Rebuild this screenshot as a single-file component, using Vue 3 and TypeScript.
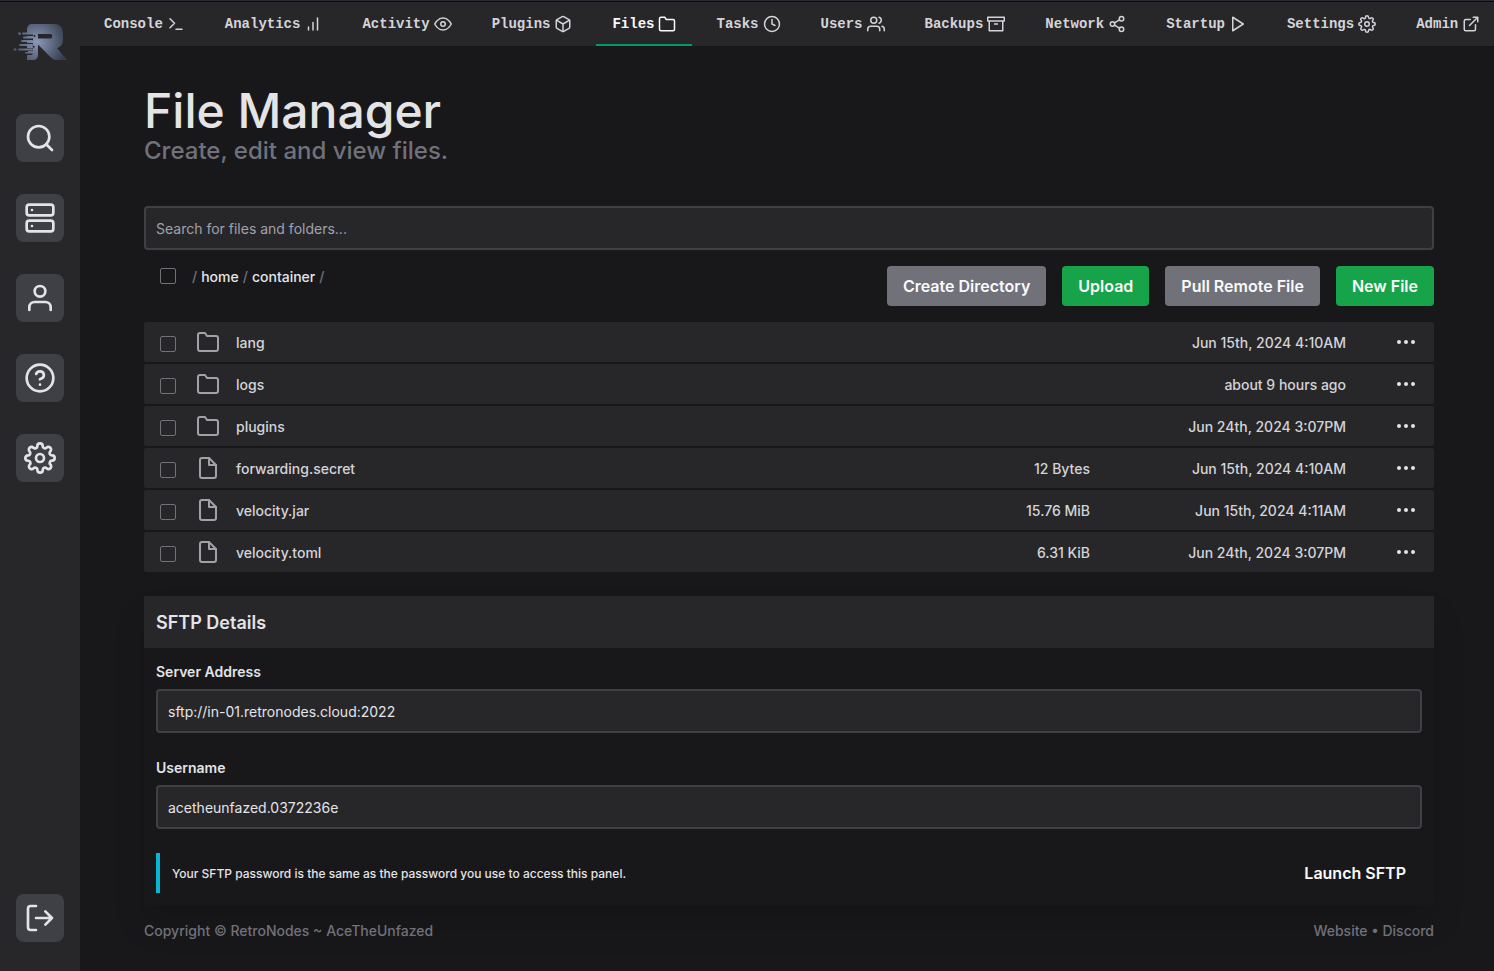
<script setup lang="ts">
import { ref } from 'vue'

interface NavItem {
  label: string
  icon: string
}

interface FileEntry {
  name: string
  kind: 'folder' | 'file'
  size: string
  modified: string
}

const icons: Record<string, string> = {
  terminal: '<path d="M4 17l6-6-6-6M12 19h8"/>',
  chart: '<path d="M18 20V4M12 20V10M6 20v-4"/>',
  eye: '<path d="M1 12s4-8 11-8 11 8 11 8-4 8-11 8-11-8-11-8z"/><circle cx="12" cy="12" r="3"/>',
  box: '<path d="M21 16V8a2 2 0 0 0-1-1.73l-7-4a2 2 0 0 0-2 0l-7 4A2 2 0 0 0 3 8v8a2 2 0 0 0 1 1.73l7 4a2 2 0 0 0 2 0l7-4A2 2 0 0 0 21 16z"/><path d="M3.27 6.96L12 12.01l8.73-5.05M12 22.08V12"/>',
  folder: '<path d="M22 19a2 2 0 0 1-2 2H4a2 2 0 0 1-2-2V5a2 2 0 0 1 2-2h5l2 3h9a2 2 0 0 1 2 2z"/>',
  clock: '<circle cx="12" cy="12" r="10"/><path d="M12 6v6l4 2"/>',
  users: '<path d="M17 21v-2a4 4 0 0 0-4-4H5a4 4 0 0 0-4 4v2"/><circle cx="9" cy="7" r="4"/><path d="M23 21v-2a4 4 0 0 0-3-3.87M16 3.13a4 4 0 0 1 0 7.75"/>',
  archive: '<path d="M21 8v13H3V8M1 3h22v5H1zM10 12h4"/>',
  share: '<circle cx="18" cy="5" r="3"/><circle cx="6" cy="12" r="3"/><circle cx="18" cy="19" r="3"/><path d="M8.59 13.51l6.83 3.98M15.41 6.51l-6.82 3.98"/>',
  play: '<path d="M5 3l14 9-14 9z"/>',
  settings: '<circle cx="12" cy="12" r="3"/><path d="M19.4 15a1.65 1.65 0 0 0 .33 1.82l.06.06a2 2 0 0 1 0 2.83 2 2 0 0 1-2.83 0l-.06-.06a1.65 1.65 0 0 0-1.82-.33 1.65 1.65 0 0 0-1 1.51V21a2 2 0 0 1-2 2 2 2 0 0 1-2-2v-.09A1.65 1.65 0 0 0 9 19.4a1.65 1.65 0 0 0-1.82.33l-.06.06a2 2 0 0 1-2.83 0 2 2 0 0 1 0-2.83l.06-.06a1.65 1.65 0 0 0 .33-1.82 1.65 1.65 0 0 0-1.51-1H3a2 2 0 0 1-2-2 2 2 0 0 1 2-2h.09A1.65 1.65 0 0 0 4.6 9a1.65 1.65 0 0 0-.33-1.82l-.06-.06a2 2 0 0 1 0-2.83 2 2 0 0 1 2.83 0l.06.06a1.65 1.65 0 0 0 1.82.33H9a1.65 1.65 0 0 0 1-1.51V3a2 2 0 0 1 2-2 2 2 0 0 1 2 2v.09a1.65 1.65 0 0 0 1 1.51 1.65 1.65 0 0 0 1.82-.33l.06-.06a2 2 0 0 1 2.83 0 2 2 0 0 1 0 2.83l-.06.06a1.65 1.65 0 0 0-.33 1.82V9a1.65 1.65 0 0 0 1.51 1H21a2 2 0 0 1 2 2 2 2 0 0 1-2 2h-.09a1.65 1.65 0 0 0-1.51 1z"/>',
  external: '<path d="M18 13v6a2 2 0 0 1-2 2H5a2 2 0 0 1-2-2V8a2 2 0 0 1 2-2h6M15 3h6v6M10 14L21 3"/>',
  search: '<circle cx="11" cy="11" r="8"/><path d="M21 21l-4.35-4.35"/>',
  server: '<rect x="2" y="2" width="20" height="8" rx="2"/><rect x="2" y="14" width="20" height="8" rx="2"/><path d="M6 6h.01M6 18h.01"/>',
  user: '<path d="M20 21v-2a4 4 0 0 0-4-4H8a4 4 0 0 0-4 4v2"/><circle cx="12" cy="7" r="4"/>',
  help: '<circle cx="12" cy="12" r="10"/><path d="M9.09 9a3 3 0 0 1 5.83 1c0 2-3 3-3 3M12 17h.01"/>',
  logout: '<path d="M9 21H5a2 2 0 0 1-2-2V5a2 2 0 0 1 2-2h4M16 17l5-5-5-5M21 12H9"/>',
  file: '<path d="M13 2H6a2 2 0 0 0-2 2v16a2 2 0 0 0 2 2h12a2 2 0 0 0 2-2V9z"/><path d="M13 2v7h7"/>',
  more: '<circle cx="12" cy="12" r="1"/><circle cx="19" cy="12" r="1"/><circle cx="5" cy="12" r="1"/>',
}

const nav: NavItem[] = [
  { label: 'Console', icon: 'terminal' },
  { label: 'Analytics', icon: 'chart' },
  { label: 'Activity', icon: 'eye' },
  { label: 'Plugins', icon: 'box' },
  { label: 'Files', icon: 'folder' },
  { label: 'Tasks', icon: 'clock' },
  { label: 'Users', icon: 'users' },
  { label: 'Backups', icon: 'archive' },
  { label: 'Network', icon: 'share' },
  { label: 'Startup', icon: 'play' },
  { label: 'Settings', icon: 'settings' },
  { label: 'Admin', icon: 'external' },
]

const side: NavItem[] = [
  { label: 'Search', icon: 'search' },
  { label: 'Servers', icon: 'server' },
  { label: 'Account', icon: 'user' },
  { label: 'Help', icon: 'help' },
  { label: 'Settings', icon: 'settings' },
]

const files: FileEntry[] = [
  { name: 'lang', kind: 'folder', size: '', modified: 'Jun 15th, 2024 4:10AM' },
  { name: 'logs', kind: 'folder', size: '', modified: 'about 9 hours ago' },
  { name: 'plugins', kind: 'folder', size: '', modified: 'Jun 24th, 2024 3:07PM' },
  { name: 'forwarding.secret', kind: 'file', size: '12 Bytes', modified: 'Jun 15th, 2024 4:10AM' },
  { name: 'velocity.jar', kind: 'file', size: '15.76 MiB', modified: 'Jun 15th, 2024 4:11AM' },
  { name: 'velocity.toml', kind: 'file', size: '6.31 KiB', modified: 'Jun 24th, 2024 3:07PM' },
]

const active = ref('Files')
const query = ref('')
const address = ref('sftp://in-01.retronodes.cloud:2022')
const username = ref('acetheunfazed.0372236e')
const selected = ref<string[]>([])

function toggleAll(event: Event) {
  const on = (event.target as HTMLInputElement).checked
  selected.value = on ? files.map((f) => f.name) : []
}
</script>

<template>
  <div class="page">
    <aside class="sidebar">
      <a href="#" class="logo" aria-label="RetroNodes">
        <svg viewBox="0 0 56 40" fill="none">
          <defs>
            <radialGradient id="steel" cx="25" cy="20" r="30" gradientUnits="userSpaceOnUse">
              <stop offset="0" stop-color="#8b98b5" />
              <stop offset="0.45" stop-color="#65718a" />
              <stop offset="1" stop-color="#363f50" />
            </radialGradient>
          </defs>
          <g fill="url(#steel)">
            <path
              fill-rule="evenodd"
              d="M20 2H43C48 2 51 6 51 11V18C51 22 49 25 45 26L55 38H44C42 38 40.500 37 39 35.500L26 22.500V33C26 36 24 38 21 38H16C15 38 15 37.500 15 37V34C15 33.300 15.500 33 16 33H19C21 33 21 31 20 31H16V29H21V26H15V24H21V21H15V19H21V16H15V14H21V12H15V8C15 4 17 2 20 2ZM26 12V16.500H38.500C41 16.500 41 12 38.500 12Z"
            />
            <circle cx="7.500" cy="11.500" r="1.500" />
            <rect x="10" y="10.500" width="12" height="2" rx="1" />
            <rect x="11" y="14.500" width="10" height="2" rx="1" />
            <rect x="9" y="18" width="12" height="2" rx="1" />
            <rect x="7" y="22" width="14" height="2" rx="1" />
            <circle cx="3" cy="27.500" r="1.500" />
            <rect x="6" y="26.500" width="15" height="2" rx="1" />
            <rect x="13" y="30" width="8" height="1.500" rx="0.750" />
          </g>
          <g fill="#27272a">
            <circle cx="22.500" cy="14" r="1" />
            <circle cx="21.700" cy="24.700" r="1" />
          </g>
        </svg>
      </a>
      <nav class="side-nav" aria-label="Main">
        <button v-for="s in side" :key="s.label" type="button" class="side-btn" :aria-label="s.label">
          <svg class="icon" viewBox="0 0 24 24" v-html="icons[s.icon]" />
        </button>
      </nav>
      <button type="button" class="side-btn logout" aria-label="Log out">
        <svg class="icon" viewBox="0 0 24 24" v-html="icons.logout" />
      </button>
    </aside>

    <div class="content">
      <nav class="topbar" aria-label="Server">
        <a
          v-for="n in nav"
          :key="n.label"
          href="#"
          class="tab"
          :class="{ active: n.label === active }"
          @click.prevent="active = n.label"
        >
          <span>{{ n.label }}</span>
          <svg class="icon" viewBox="0 0 24 24" v-html="icons[n.icon]" />
        </a>
      </nav>

      <main class="main">
        <h1>File Manager</h1>
        <p class="subtitle">Create, edit and view files.</p>

        <input v-model="query" class="field search" type="text" aria-label="Search" placeholder="Search for files and folders..." />

        <div class="toolbar">
          <div class="crumbs">
            <input
              type="checkbox"
              class="check"
              aria-label="Select all"
              :checked="selected.length === files.length"
              @change="toggleAll"
            />
            <div class="path">
              <span>/</span>
              <a href="#">home</a>
              <span>/</span>
              <a href="#">container</a>
              <span>/</span>
            </div>
          </div>
          <div class="actions">
            <button type="button" class="btn">Create Directory</button>
            <button type="button" class="btn green">Upload</button>
            <button type="button" class="btn">Pull Remote File</button>
            <button type="button" class="btn green">New File</button>
          </div>
        </div>

        <table class="files">
          <tbody>
            <tr v-for="f in files" :key="f.name">
              <td class="c-check">
                <input v-model="selected" type="checkbox" class="check" :value="f.name" :aria-label="'Select ' + f.name" />
              </td>
              <td class="c-icon"><svg class="icon" viewBox="0 0 24 24" v-html="icons[f.kind]" /></td>
              <td class="c-text"><a href="#">{{ f.name }}</a></td>
              <td class="c-text c-size">{{ f.size }}</td>
              <td class="c-text c-date">{{ f.modified }}</td>
              <td class="c-more">
                <button type="button" :aria-label="'Actions for ' + f.name">
                  <svg class="icon" viewBox="0 0 24 24" v-html="icons.more" />
                </button>
              </td>
            </tr>
          </tbody>
        </table>

        <section class="card">
          <h2>SFTP Details</h2>
          <div class="card-body">
            <label for="address">Server Address</label>
            <input id="address" v-model="address" class="field" type="text" readonly />
            <label for="username" class="second">Username</label>
            <input id="username" v-model="username" class="field" type="text" readonly />
            <div class="launch">
              <p>Your SFTP password is the same as the password you use to access this panel.</p>
              <button type="button" class="btn plain">Launch SFTP</button>
            </div>
          </div>
        </section>

        <footer>
          <span>Copyright © RetroNodes ~ AceTheUnfazed</span>
          <span><a href="#">Website</a> • <a href="#">Discord</a></span>
        </footer>
      </main>
    </div>
  </div>
</template>

<style>
body {
  margin: 0;
  background: #18181b;
}
</style>

<style scoped>
* {
  box-sizing: border-box;
}

.page {
  display: flex;
  min-height: 100vh;
  border-top: 1px solid #2b2a33;
  background: #18181b;
  color: #e4e4e7;
  font: 500 14px/20px Inter, sans-serif;
}

a {
  color: inherit;
  text-decoration: none;
}

button {
  border: 0;
  font: inherit;
  color: inherit;
  cursor: pointer;
}

.icon {
  display: block;
  flex: none;
  fill: none;
  stroke: currentColor;
  stroke-width: 2;
  stroke-linecap: round;
  stroke-linejoin: round;
}

.sidebar {
  display: flex;
  flex: none;
  flex-direction: column;
  align-items: center;
  width: 80px;
  padding: 20px 0 29px;
  border-top: 1px solid #0c0c0d;
  background: #27272a;
}

.logo svg {
  display: block;
  width: 56px;
  height: 40px;
}

.side-nav {
  display: flex;
  flex-direction: column;
  gap: 32px;
  margin-top: 52px;
}

.side-btn {
  width: 48px;
  height: 48px;
  padding: 8px;
  border-radius: 8px;
  background: #3f3f46;
  color: #e4e4e7;
}

.side-btn .icon {
  width: 32px;
  height: 32px;
}

.logout {
  margin-top: auto;
}

.content {
  flex: 1;
  min-width: 0;
}

.topbar {
  display: flex;
  gap: 8px;
  padding-left: 8px;
  overflow: hidden;
  border-top: 1px solid #0c0c0d;
  background: #27272a;
  font: 700 14px/20px "Liberation Mono", monospace;
}

.tab {
  display: flex;
  flex: none;
  align-items: center;
  gap: 4px;
  height: 44px;
  padding: 2px 16px 0;
  border-bottom: 2px solid transparent;
  color: #d4d4d8;
}

.tab .icon {
  width: 18px;
  height: 18px;
}

.tab.active {
  border-color: #059669;
  color: #fafafa;
}

.main {
  padding: 40px 60px 30px 64px;
}

h1 {
  margin: 0;
  font-size: 48px;
  font-weight: 500;
  line-height: 50px;
}

.subtitle {
  margin: 0 0 40px;
  color: #71717a;
  font-size: 24px;
  line-height: 30px;
}

.field {
  display: block;
  width: 100%;
  height: 44px;
  padding: 0 10px;
  border: 2px solid #3f3f46;
  border-radius: 4px;
  outline: 0;
  background: #27272a;
  color: #e4e4e7;
  font: 400 14px/20px Inter, sans-serif;
}

.field::placeholder {
  color: #a1a1aa;
  opacity: 1;
}

.toolbar {
  display: flex;
  justify-content: space-between;
  margin: 16px 0 14px;
}

.crumbs {
  display: flex;
  gap: 16px;
  padding: 1px 0 0 16px;
}

.crumbs .check {
  margin-top: 1px;
}

.path {
  display: flex;
  gap: 4px;
  color: #71717a;
}

.path a {
  color: #e4e4e7;
}

.check {
  display: block;
  width: 16px;
  height: 16px;
  margin: 0;
  appearance: none;
  border: 1px solid #71717a;
  border-radius: 2px;
  background: transparent;
}

.check:checked {
  background: #059669;
}

.actions {
  display: flex;
  gap: 16px;
}

.btn {
  height: 40px;
  padding: 0 16px;
  border-radius: 4px;
  background: #71717a;
  color: #fafafa;
  font-size: 16px;
  font-weight: 600;
  white-space: nowrap;
}

.green {
  background: #16a34a;
}

.plain {
  background: transparent;
}

.files {
  width: 100%;
  table-layout: fixed;
  border-spacing: 0 2px;
}

.files td {
  height: 40px;
  padding: 0;
  background: #27272a;
  color: #d4d4d8;
}

.files td:first-child {
  border-radius: 2px 0 0 2px;
}

.files td:last-child {
  border-radius: 0 2px 2px 0;
}

.files .c-check {
  width: 52px;
  padding: 4px 0 0 16px;
}

.files .c-icon {
  width: 40px;
  color: #a1a1aa;
}

.files .c-text {
  padding-top: 2px;
}

.c-icon .icon,
.c-more .icon {
  width: 24px;
  height: 24px;
}

.c-size {
  width: 16%;
  text-align: right;
}

.c-date {
  width: 256px;
  text-align: right;
}

.files .c-more {
  width: 88px;
  padding-right: 16px;
  color: #e4e4e7;
}

.c-more button {
  display: block;
  margin-left: auto;
  padding: 0;
  background: none;
}

.card {
  margin-top: 22px;
  box-shadow: 0 20px 30px rgba(0, 0, 0, 0.12);
}

h2 {
  margin: 0;
  padding: 13px 12px 11px;
  background: #27272a;
  font-size: 18px;
  font-weight: 600;
  line-height: 28px;
}

.card-body {
  padding: 14px 12px 12px;
}

label {
  display: block;
  margin-bottom: 7px;
  font-weight: 600;
}

.second {
  margin-top: 25px;
}

.launch {
  display: flex;
  justify-content: space-between;
  margin-top: 24px;
}

.launch p {
  margin: 0;
  padding: 2px 0 0 12px;
  border-left: 4px solid #06b6d4;
  font-size: 12px;
  line-height: 38px;
}

footer {
  display: flex;
  justify-content: space-between;
  margin-top: 16px;
  color: #71717a;
}
</style>
